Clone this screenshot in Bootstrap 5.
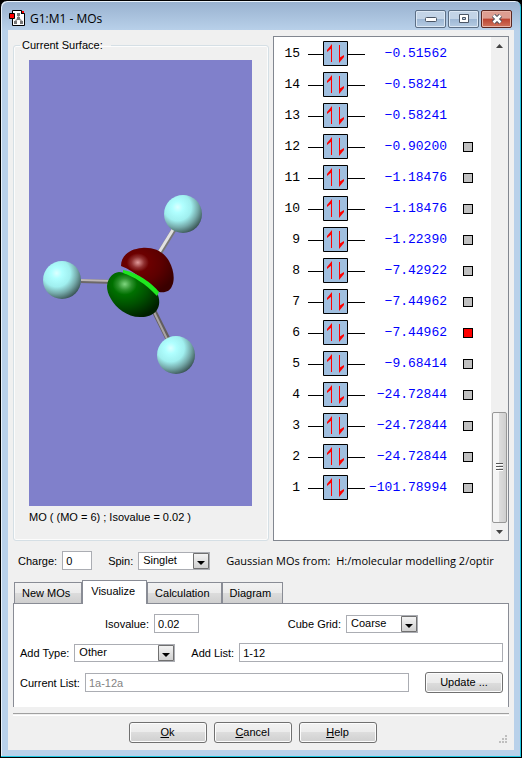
<!DOCTYPE html>
<html lang="en">
<head>
<meta charset="utf-8">
<meta name="viewport" content="width=device-width, initial-scale=1">
<title>G1:M1 - MOs</title>
<link rel="stylesheet" href="https://cdn.jsdelivr.net/npm/bootstrap@5.3.0/dist/css/bootstrap.min.css">
<style>
  body { background: #000; font: 11px/14px "Liberation Sans", Arial, sans-serif; color: #000; }
  .frame {
    min-height: 100vh; border: 1px solid #000; border-radius: 7px 7px 0 0;
    background: linear-gradient(#98b1cf, #b9d1ea 30px); padding: 0 7px 7px;
    box-shadow: inset -1px -1px 0 #1fc6e0, inset 1px 1px 0 #e9f2fb;
  }
  .titlebar { height: 29px; padding: 8px 2px 0 1px; }
  .caption { font: 12px/20px "Open Sans", "Noto Sans", sans-serif; margin: 0 0 0 4px; }
  .wbtns { margin-top: 1px; gap: 2px; }
  .wbtn { width: 31px; height: 18px; padding: 0; border: 1px solid #5c6f86; border-radius: 2px; box-shadow: inset 0 0 0 1px #dce8f5; background: linear-gradient(#c3d4e7 50%, #9db7d4 50%, #b5cbe2); }
  .wbtn svg { display: block; margin: auto; }
  .wbtn-close { border-color: #5a2620; box-shadow: inset 0 0 0 1px #e9b4a8; background: linear-gradient(#dd9d91 45%, #bc4330 50%, #d0735c); }
  .client { background: #f0f0f0; padding: 6px 5px 5px 5px; }
  .surface { width: 256px; margin: 0; padding: 0 15px 14px; border: 1px solid #d5dfe5; border-radius: 3px; box-shadow: inset 0 0 0 1px #fcfcfc; min-height: 503px; }
  .surface-wrap { padding-top: 2px; }
  .surface legend { float: none; width: auto; font-size: 11px; line-height: 14px; margin: 0 0 0 -9px; padding: 0 8px 0 2px; }
  .scene { background: #8080cb; display: block; width: 223px; height: 446px; margin-top: 8px; }
  .orbitals { border: 1px solid #828790; background: #fff; }
  .levels { padding-top: 1px; }
  .level { height: 31px; }
  .level .num { width: 26px; }
  .level .val { width: 82px; color: #00f; white-space: nowrap; }
  .level .num, .level .val { font: 13px/18px "Liberation Mono", "Courier New", monospace; text-align: right; }
  .level svg { width: 57px; height: 25px; margin-left: 8px; }
  .pick { appearance: none; width: 10px; height: 10px; margin: 0 0 0 16px; border: 1px solid #000; background: #c0c0c0; }
  .pick:checked { background: #f00; }
  .sbar { width: 17px; background: #f0f0f0; }
  .sbar button { height: 17px; padding: 0; border: 0; background: none; }
  .thumb { height: 111px; border: 1px solid #979797; border-radius: 2px; background: linear-gradient(90deg, #f5f5f5 45%, #dcdcdc 50%, #cfcfcf); width: 15px; }
  .field-label { margin-right: 5px; }
  .box, .pickbox { height: 19px; border: 1px solid #abadb3; border-radius: 0; background-color: #fff; font-size: 11px; line-height: 15px; color: #000; padding: 0 3px; min-width: 0; }
  .box:disabled { color: #838383; }
  .pickbox { appearance: none; height: 18px; padding-left: 4px; background-repeat: no-repeat; background-position: right 0 top 0;
    background-image: url("data:image/svg+xml,%3Csvg xmlns='http://www.w3.org/2000/svg' width='16' height='16'%3E%3ClinearGradient id='g' x2='0' y2='1'%3E%3Cstop stop-color='%23f4f4f4'/%3E%3Cstop offset='1' stop-color='%23cfcfcf'/%3E%3C/linearGradient%3E%3Cpath d='M.5.5h15v15H.5z' fill='url(%23g)' stroke='%23707070'/%3E%3Cpath d='M4 8h8l-4 4z'/%3E%3C/svg%3E"); }
  .w-charge { width: 30px; } .w-short { width: 72px; } .w-iso { width: 45px; } .w-type { width: 101px; }
  .setup { padding: 10px 0 10px 5px; }
  .source { font: 11px/16px "Open Sans", "Noto Sans", sans-serif; white-space: pre; margin-left: 16px; }
  .tabs { padding-left: 1px; }
  .tabs .nav-link { font-size: 11px; line-height: 14px; color: #000; border: 1px solid #898c95; border-bottom: 0; border-radius: 0; background: linear-gradient(#f2f2f2, #ebebeb 50%, #dcdcdc 50%, #cfcfcf); padding: 3px 11px 4px 7px; height: 21px; }
  .tabs .nav-link.active { background: #fff; padding: 3px 11px 7px 8px; height: 24px; margin-bottom: -1px; position: relative; }
  .page { background: #fff; border: 1px solid #898c95; border-bottom: 0; padding: 10px 5px 12px 6px; min-height: 104px; gap: 10px; }
  .page-top { padding: 0 85px; }
  .pbtn { height: 21px; width: 78px; padding: 0; border: 1px solid #707070; border-radius: 3px; font-size: 11px; line-height: 17px; color: #000; box-shadow: inset 0 0 0 1px #fcfcfc; background: linear-gradient(#f2f2f2, #ebebeb 50%, #dddddd 50%, #cfcfcf); }
  .rule { border-top: 1px solid #a0a0a0; border-bottom: 1px solid #fff; height: 3px; margin: 6px 0; }
  .actions { gap: 7px; padding-right: 17px; position: relative; }
  .grip { position: absolute; right: 2px; bottom: 0; }
</style>
<script src="https://cdn.jsdelivr.net/npm/bootstrap@5.3.0/dist/js/bootstrap.bundle.min.js"></script>
</head>
<body>
<div class="frame d-flex flex-column">
  <header class="titlebar d-flex align-items-start">
    <svg width="17" height="18" viewBox="0 0 17 18" aria-hidden="true">
      <path d="M3.500 1.500h9l3 3v12h-12z" fill="#fff" stroke="#000"/>
      <path d="M12 1v4h4z" fill="#000"/><path d="M13 2h2v2h-2z" fill="#f00"/>
      <path d="M9.500 5v5M9.500 9l-4 4M9.500 9l4 4" stroke="#999" stroke-width="1.500" fill="none"/>
      <path d="M8 4h3v3H8zM5 12h3v3H5zM11 12h3v3h-3zM8 8h3v3H8z" fill="#777"/>
      <path d="M.5 4.500h5v5h-5z" fill="#f00" stroke="#000"/>
    </svg>
    <div class="caption me-auto">G1:M1 - MOs</div>
    <div class="wbtns d-flex">
      <button class="wbtn" type="button" aria-label="Minimize"><svg width="12" height="6"><rect x=".5" y="1.500" width="11" height="4" rx="1" fill="#fff" stroke="#4a5565"/></svg></button>
      <button class="wbtn" type="button" aria-label="Maximize"><svg width="12" height="10"><path d="M1.500.5h9v8h-9zM4.500 3.500h3v2h-3z" fill="#fff" fill-rule="evenodd" stroke="#4a5565"/></svg></button>
      <button class="wbtn wbtn-close" type="button" aria-label="Close"><svg width="12" height="10"><path d="M2.500 1.500l7 7M9.500 1.500l-7 7" stroke="#4b4f5c" stroke-width="4.500"/><path d="M2.500 1.500l7 7M9.500 1.500l-7 7" stroke="#fff" stroke-width="2.500"/></svg></button>
    </div>
  </header>

  <main class="client flex-grow-1">
    <div class="d-flex">
      <div class="surface-wrap me-1">
      <fieldset class="surface">
        <legend>Current Surface:</legend>
        <svg class="scene" viewBox="0 0 223 446" role="img" aria-label="Molecular orbital surface">
          <defs>
            <radialGradient id="fl" cx=".36" cy=".32" r=".72"><stop offset="0" stop-color="#dcffff"/><stop offset=".2" stop-color="#b0ffff"/><stop offset=".5" stop-color="#a0efef"/><stop offset=".75" stop-color="#74a8a8"/><stop offset="1" stop-color="#3a5555"/></radialGradient>
            <radialGradient id="red" cx=".32" cy=".33" r=".75"><stop offset="0" stop-color="#e09a9a"/><stop offset=".16" stop-color="#903030"/><stop offset=".28" stop-color="#6c0000"/><stop offset=".6" stop-color="#5c0000"/><stop offset="1" stop-color="#3a0000"/></radialGradient>
            <radialGradient id="grn" cx=".34" cy=".27" r=".78"><stop offset="0" stop-color="#7fd67f"/><stop offset=".17" stop-color="#2c902c"/><stop offset=".3" stop-color="#007000"/><stop offset=".6" stop-color="#005000"/><stop offset="1" stop-color="#001f00"/></radialGradient>
          </defs>
          <g fill="none">
            <path d="M52 221L85 222" stroke="#6c6868" stroke-width="4"/><path d="M52 220L85 221" stroke="#bdb6b6" stroke-width="2"/>
            <path d="M146 168L130 194" stroke="#777" stroke-width="5"/><path d="M145 168L129 194" stroke="#e2e2e2" stroke-width="3"/>
            <path d="M125 251L140 281" stroke="#625e5e" stroke-width="5"/><path d="M125 252L139 281" stroke="#aaa4a4" stroke-width="2"/>
          </g>
          <g fill="url(#fl)"><circle cx="154" cy="154" r="19"/><circle cx="33" cy="220" r="19"/><circle cx="147" cy="295" r="19"/></g>
          <path d="M92 206C92 196 100 189 113 188C125 187 135 192 140 201C145 210 146 220 143 226C141 231 137 233 130 232C120 226 108 212 92 206z" fill="url(#red)"/>
          <path d="M78 226C79 217 84 213 90 212C101 213 123 225 129 235C134 250 123 257 113 257C99 258 87 248 82 239C79 234 78 230 78 226z" fill="url(#grn)"/>
          <path d="M94 210C108 212 124 224 130 232L128 236C116 223 105 217 94 213z" fill="#1fe81f"/>
        </svg>
        <div class="mt-1">MO ( (MO = 6) ; Isovalue = 0.02 )</div>
      </fieldset>
      </div>

      <section class="orbitals d-flex flex-grow-1" aria-label="Orbital energies">
        <div class="levels flex-grow-1" id="levels"></div>
        <div class="sbar d-flex flex-column align-items-center">
          <button type="button" aria-label="Scroll up"><svg width="9" height="6" class="d-block"><path d="M1 5h7L4.500 1z" fill="#444"/></svg></button>
          <div class="thumb mt-auto d-flex align-items-center justify-content-center"><svg width="7" height="9"><path d="M0 .5h7M0 3.500h7M0 6.500h7" stroke="#555"/><path d="M0 1.500h7M0 4.500h7M0 7.500h7" stroke="#fff"/></svg></div>
          <button type="button" aria-label="Scroll down"><svg width="9" height="6" class="d-block"><path d="M1 1h7L4.500 5z" fill="#444"/></svg></button>
        </div>
      </section>
    </div>

    <div class="setup d-flex align-items-center">
      <label class="field-label" for="charge">Charge:</label><input class="box w-charge" id="charge" value="0">
      <label class="field-label ms-3" for="spin">Spin:</label><select class="pickbox w-short" id="spin"><option>Singlet</option></select>
      <div class="source">Gaussian MOs from:  H:/molecular modelling 2/optir</div>
    </div>

    <div class="tabs nav align-items-end" role="tablist">
      <button class="nav-link" type="button" role="tab">New MOs</button>
      <button class="nav-link active" type="button" role="tab">Visualize</button>
      <button class="nav-link" type="button" role="tab">Calculation</button>
      <button class="nav-link" type="button" role="tab">Diagram</button>
    </div>
    <div class="page d-flex flex-column" role="tabpanel">
      <div class="page-top d-flex align-items-center">
        <label class="field-label" for="iso">Isovalue:</label><input class="box w-iso" id="iso" value="0.02">
        <label class="field-label ms-auto" for="grid">Cube Grid:</label><select class="pickbox w-short" id="grid"><option>Coarse</option></select>
      </div>
      <div class="d-flex align-items-center">
        <label class="field-label" for="type">Add Type:</label><select class="pickbox w-type" id="type"><option>Other</option></select>
        <label class="field-label ms-3" for="list">Add List:</label><input class="box flex-grow-1" id="list" value="1-12">
      </div>
      <div class="d-flex align-items-center">
        <label class="field-label" for="cur">Current List:</label><input class="box flex-grow-1 me-3" id="cur" value="1a-12a" disabled>
        <button class="pbtn" type="button">Update ...</button>
      </div>
    </div>
    <div class="rule"></div>
    <div class="actions d-flex justify-content-center">
      <button class="pbtn" type="button"><u>O</u>k</button>
      <button class="pbtn" type="button"><u>C</u>ancel</button>
      <button class="pbtn" type="button"><u>H</u>elp</button>
      <svg class="grip" width="8" height="8" aria-hidden="true"><path d="M6 0h2v2H6zM6 3h2v2H6zM3 3h2v2H3zM0 6h2v2H0zM3 6h2v2H3zM6 6h2v2H6z" fill="#bfbfbf"/></svg>
    </div>
  </main>
</div>
<script>
  const energies = ["101.78994", "24.72844", "24.72844", "24.72844", "9.68414", "7.44962", "7.44962", "7.42922", "1.22390", "1.18476", "1.18476", "0.90200", "0.58241", "0.58241", "0.51562"];
  document.getElementById("levels").innerHTML = energies.map((e, i) => `
    <div class="level d-flex align-items-center">
      <span class="num">${i + 1}</span>
      <svg viewBox="0 0 57 25" aria-hidden="true"><path d="M0 13.500h57" stroke="#000"/><path d="M15.500.5h24v24h-24z" fill="#a0bfdf" stroke="#000"/><path d="M23.500 21V4M31.500 4v17" stroke="#f00" fill="none"/><path d="M24 3v4l-5 4v-2zM31 22v-5l5-3v2z" fill="#f00"/></svg>
      <span class="val">−${e}</span>
      ${i < 12 ? `<input class="pick" type="checkbox" aria-label="Show orbital ${i + 1}"${i === 5 ? " checked" : ""}>` : ""}
    </div>`).reverse().join("");
</script>
</body>
</html>
